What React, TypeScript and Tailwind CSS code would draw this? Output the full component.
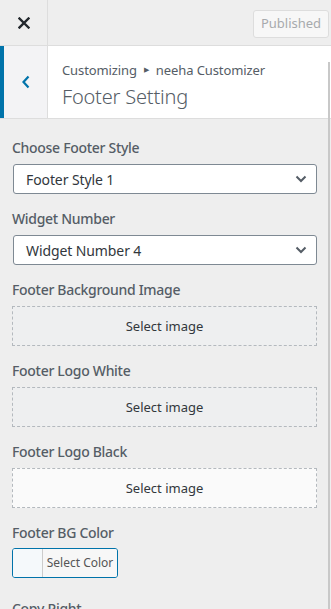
import React from "react";

const font = { fontFamily: '"Noto Sans", "Open Sans", Arial, sans-serif' };

function Label({ children, mb = "mb-[4px]" }: { children: React.ReactNode; mb?: string }) {
  return (
    <div className={`h-[24px] leading-[24px] text-[14px] font-medium text-[#555d66] tracking-[-0.3px] ${mb}`}>
      {children}
    </div>
  );
}

function Select({ value }: { value: string }) {
  return (
    <div className="ml-[1px] w-[304px] h-[30px] border border-[#7e8993] rounded-[3px] bg-white flex items-center justify-between pl-[12px] pr-[9px] mb-[13px]">
      <span className="text-[14px] text-[#32373c] tracking-[-0.1px]">{value}</span>
      <svg width="12" height="8" viewBox="0 0 12 8">
        <path d="M1.5 1.5 L6 6 L10.5 1.5" fill="none" stroke="#555d66" strokeWidth="2" />
      </svg>
    </div>
  );
}

function ImageBox({ light }: { light?: boolean }) {
  return (
    <div
      className={`w-[305px] h-[40px] border border-dashed border-[#b4b9be] flex items-center justify-center pt-[1px] mb-[13px] ${
        light ? "bg-[#fafafa]" : "bg-[#eeeff0]"
      }`}
    >
      <span className="text-[13px] text-[#32373c]">Select image</span>
    </div>
  );
}

export default function App() {
  return (
    <div className="relative w-[331px] h-[609px] overflow-hidden bg-[#eeeeee]" style={font}>
      {/* top bar */}
      <div className="flex h-[46px] border-b border-[#dddddd] bg-[#eeeeee]">
        <div className="w-[48px] h-full border-r border-[#dddddd] flex items-center justify-center pt-[1px]">
          <svg width="12" height="12" viewBox="0 0 12 12">
            <path d="M1.5 1.5 L10.5 10.5 M10.5 1.5 L1.5 10.5" stroke="#23282d" strokeWidth="2.4" strokeLinecap="square" />
          </svg>
        </div>
        <div className="flex-1" />
        <div className="mt-[10px] mr-[2px] w-[76px] h-[28px] border border-[#dddddd] rounded-[3px] bg-[#f7f7f7] flex items-center justify-center text-[13px] text-[#a7aaad]">
          Published
        </div>
      </div>

      {/* section header */}
      <div className="flex h-[73px] border-b border-[#dddddd] bg-white">
        <div className="w-[48px] h-full border-l-[4px] border-l-[#0073aa] border-r border-r-[#dddddd] bg-[#f3f3f5] flex items-center justify-center">
          <svg width="10" height="14" viewBox="0 0 10 14">
            <path d="M7.5 1.5 L2.5 7 L7.5 12.5" fill="none" stroke="#0073aa" strokeWidth="2.2" />
          </svg>
        </div>
        <div className="pl-[14px] pt-[14px] flex flex-col">
          <div className="text-[13px] leading-[20px] text-[#555d66] flex items-center tracking-[-0.1px]">
            <span>Customizing</span>
            <span className="text-[7px] mx-[7px]">▶</span>
            <span>neeha Customizer</span>
          </div>
          <div className="text-[20px] leading-[28px] font-light text-[#555d66] mt-[3px] tracking-[-0.2px]">
            Footer Setting
          </div>
        </div>
      </div>

      {/* content */}
      <div className="pl-[12px] pr-[14px] pt-[17px]">
        <Label>Choose Footer Style</Label>
        <Select value="Footer Style 1" />
        <Label>Widget Number</Label>
        <Select value="Widget Number 4" />
        <Label>Footer Background Image</Label>
        <ImageBox />
        <Label>Footer Logo White</Label>
        <ImageBox />
        <Label>Footer Logo Black</Label>
        <ImageBox light />
        <Label mb="mb-[3px]">Footer BG Color</Label>
        <div className="flex w-[106px] h-[30px] border border-[#0073aa] rounded-[3px] overflow-hidden mb-[19px]">
          <div className="w-[30px] h-full bg-[#f5f9fb] border-r border-[#cccccc]" />
          <div className="flex-1 bg-[#f7f7f7] flex items-center justify-center text-[12px] text-[#555555]">
            Select Color
          </div>
        </div>
        <Label>Copy Right</Label>
      </div>

      {/* scrollbar */}
      <div className="absolute right-[1px] top-[62px] bottom-0 w-[2px] bg-[#c8c8c8]" />
    </div>
  );
}
